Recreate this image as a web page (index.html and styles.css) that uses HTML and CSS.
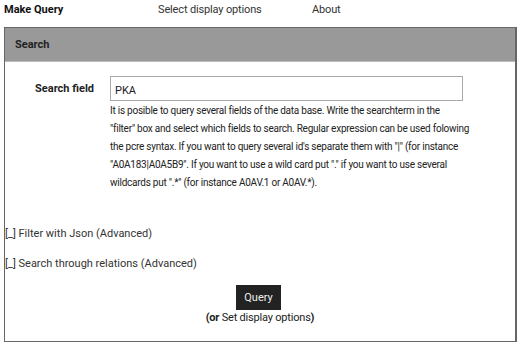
FILE: index.html
```html
<!DOCTYPE html>
<html>
<head>
<meta charset="utf-8">
<link rel="stylesheet" href="styles.css">
</head>
<body>
<nav class="nav">
  <span class="nav-item nav-active">Make Query</span>
  <span class="nav-item nav-mid">Select display options</span>
  <span class="nav-item">About</span>
</nav>
<section class="panel">
  <div class="panel-head">Search</div>
  <div class="panel-body">
    <div class="field-row">
      <label class="field-label">Search field</label>
      <div class="field-main">
        <input class="field-input" type="text" value="PKA">
        <p class="help">It is posible to query several fields of the data base. Write the searchterm in the<br>"filter" box and select which fields to search. Regular expression can be used folowing<br>the pcre syntax. If you want to query several id's separate them with "|" (for instance<br>"A0A183|A0A5B9". If you want to use a wild card put "." if you want to use several<br>wildcards put ".*" (for instance A0AV.1 or A0AV.*).</p>
      </div>
    </div>
    <div class="toggle toggle-first">[_] Filter with Json (Advanced)</div>
    <div class="toggle">[_] Search through relations (Advanced)</div>
    <div class="actions">
      <button class="btn">Query</button>
      <div class="alt"><b>(or</b> <span class="alt-link">Set display options</span><b>)</b></div>
    </div>
  </div>
</section>
</body>
</html>
```
FILE: styles.css
```css
html, body {
  margin: 0;
  padding: 0;
  background: #fff;
}
body {
  font-family: Roboto, "DejaVu Sans", sans-serif;
  color: #222;
  font-size: 11px;
  width: 520px;
  height: 346px;
  overflow: hidden;
}
.nav {
  display: flex;
  height: 19px;
  align-items: center;
  padding-left: 4px;
}
.nav-item {
  font-size: 11px;
  color: #333;
  letter-spacing: -0.15px;
}
.nav-active {
  font-weight: bold;
  color: #111;
  width: 154px;
  letter-spacing: 0;
}
.nav-mid {
  width: 154px;
}
.panel {
  margin: 8px 3px 0 4px;
  border: 1px solid #666;
  border-right-width: 2px;
  height: 315px;
  box-sizing: border-box;
}
.panel-head {
  background: #999;
  height: 33px;
  display: flex;
  align-items: center;
  padding-left: 10px;
  font-weight: bold;
  font-size: 11px;
  color: #222;
  border-bottom: 1px solid #bbb;
}
.panel-body {
  padding-top: 14px;
}
.field-row {
  display: flex;
}
.field-label {
  width: 89px;
  text-align: right;
  font-weight: bold;
  font-size: 11px;
  padding-top: 6px;
  color: #222;
}
.field-main {
  margin-left: 16px;
  width: 353px;
}
.field-input {
  display: block;
  width: 353px;
  height: 25px;
  box-sizing: border-box;
  border: 1px solid #aaa;
  font-family: inherit;
  font-size: 11px;
  padding: 3px 4px 0;
  margin: 0;
  color: #222;
}
.help {
  margin: 1px 0 0;
  width: 385px;
  font-size: 10px;
  line-height: 18px;
  letter-spacing: -0.24px;
  white-space: nowrap;
  color: #222;
}
.toggle {
  font-size: 11px;
  color: #333;
}
.toggle-first {
  margin-top: 35px;
}
.toggle + .toggle {
  margin-top: 17px;
}
.actions {
  display: flex;
  flex-direction: column;
  align-items: center;
  margin-top: 15px;
}
.btn {
  background: #222;
  color: #eee;
  border: none;
  font-family: inherit;
  font-size: 11px;
  width: 45px;
  height: 25px;
  padding: 0;
  margin-left: -3px;
}
.alt {
  font-size: 11px;
  margin-top: 1px;
  letter-spacing: -0.2px;
  color: #222;
}
.alt-link {
  color: #222;
}
```
